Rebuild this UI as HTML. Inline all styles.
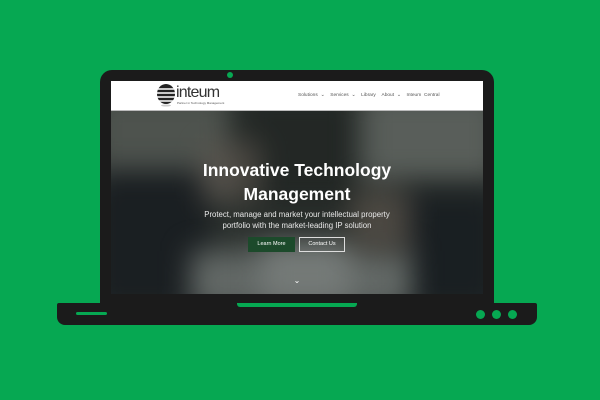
<!DOCTYPE html>
<html><head><style>
*{margin:0;padding:0;box-sizing:border-box}
body{width:600px;height:400px;background:#06a852;position:relative;overflow:hidden;font-family:"Liberation Sans",sans-serif}
.lid{position:absolute;left:100px;top:70px;width:394px;height:236px;background:#1b1b1b;border-radius:12px 12px 0 0}
.cam{position:absolute;left:227px;top:72px;width:6px;height:6px;border-radius:50%;background:#06a852}
.screen{position:absolute;left:111px;top:81px;width:372px;height:213px;overflow:hidden;background:#3b403d}
.nav{position:absolute;left:0;top:0;width:372px;height:30px;background:#fff;border-bottom:1px solid #bbb;z-index:5}
.hero{position:absolute;left:0;top:30px;width:372px;height:183px;overflow:hidden}
.b{position:absolute;filter:blur(14px)}
.base{position:absolute;left:57px;top:303px;width:480px;height:22px;background:#1b1b1b;border-radius:2px 2px 8px 8px}
.notch{position:absolute;left:237px;top:303px;width:120px;height:4px;background:#06a852;border-radius:0 0 3px 3px}
.line{position:absolute;left:76px;top:312px;width:31px;height:3px;background:#06a852;border-radius:2px}
.dot{position:absolute;top:310px;width:9px;height:9px;border-radius:50%;background:#06a852}
.t{position:absolute;left:0;width:372px;text-align:center;color:#fff}
</style></head><body>
<div class="lid"></div><div class="cam"></div>
<div class="screen">
 <div class="nav">
  <svg style="position:absolute;left:44px;top:2px" width="22" height="24" viewBox="0 0 22 24">
   <ellipse cx="11" cy="11" rx="9" ry="10" fill="#222"/>
   <path d="M3 6h16M2 10h18M2 14h18M4 18h14" stroke="#fff" stroke-width="1.6"/>
   <ellipse cx="11" cy="22.5" rx="5" ry="1" fill="#ccc"/>
  </svg>
  <div style="position:absolute;left:65px;top:3px;font-size:16px;color:#333;letter-spacing:-0.8px">inteum</div>
  <div style="position:absolute;left:66px;top:20px;font-size:3px;color:#555">Partner in Technology Management</div>
  <div style="position:absolute;left:187px;top:12px;font-size:4.8px;color:#555;word-spacing:1.5px;white-space:nowrap">Solutions ⌄ &nbsp;Services ⌄ &nbsp;Library &nbsp;About ⌄ &nbsp;Inteum Central</div>
 </div>
 <div class="hero">
  <div class="b" style="left:-20px;top:-20px;width:140px;height:100px;background:#6d726c"></div>
  <div class="b" style="left:130px;top:-20px;width:120px;height:120px;background:#2b2f2d"></div>
  <div class="b" style="left:250px;top:-20px;width:140px;height:90px;background:#7e837e"></div>
  <div class="b" style="left:-20px;top:60px;width:120px;height:140px;background:#1e2228"></div>
  <div class="b" style="left:290px;top:80px;width:100px;height:120px;background:#1d2228"></div>
  <div class="b" style="left:80px;top:140px;width:220px;height:60px;background:#8c9290"></div>
  <div class="b" style="left:150px;top:135px;width:90px;height:55px;background:#a9aeac"></div>
  <div class="b" style="left:90px;top:30px;width:60px;height:60px;background:#8a7a70;opacity:.6"></div>
  <div class="b" style="left:240px;top:80px;width:60px;height:60px;background:#8c7a6e;opacity:.6"></div>
  <div style="position:absolute;inset:0;background:rgba(20,25,22,.35)"></div>
  <div class="t" style="top:47px;font-size:17.5px;font-weight:bold;line-height:24px">Innovative Technology<br>Management</div>
  <div class="t" style="top:99px;font-size:7.8px;line-height:10.5px;color:#e8e8e8">Protect, manage and market your intellectual property<br>portfolio with the market-leading IP solution</div>
  <div style="position:absolute;left:137px;top:126px;width:47px;height:15px;background:#1c4a2b;color:#fff;font-size:5.5px;text-align:center;line-height:15px">Learn More</div>
  <div style="position:absolute;left:188px;top:126px;width:46px;height:15px;border:1px solid #ddd;color:#fff;font-size:5.5px;text-align:center;line-height:13px">Contact Us</div>
  <div class="t" style="top:165px;font-size:8px">⌄</div>
 </div>
</div>
<div class="base"></div><div class="notch"></div><div class="line"></div>
<div class="dot" style="left:476px"></div><div class="dot" style="left:492px"></div><div class="dot" style="left:508px"></div>
</body></html>
